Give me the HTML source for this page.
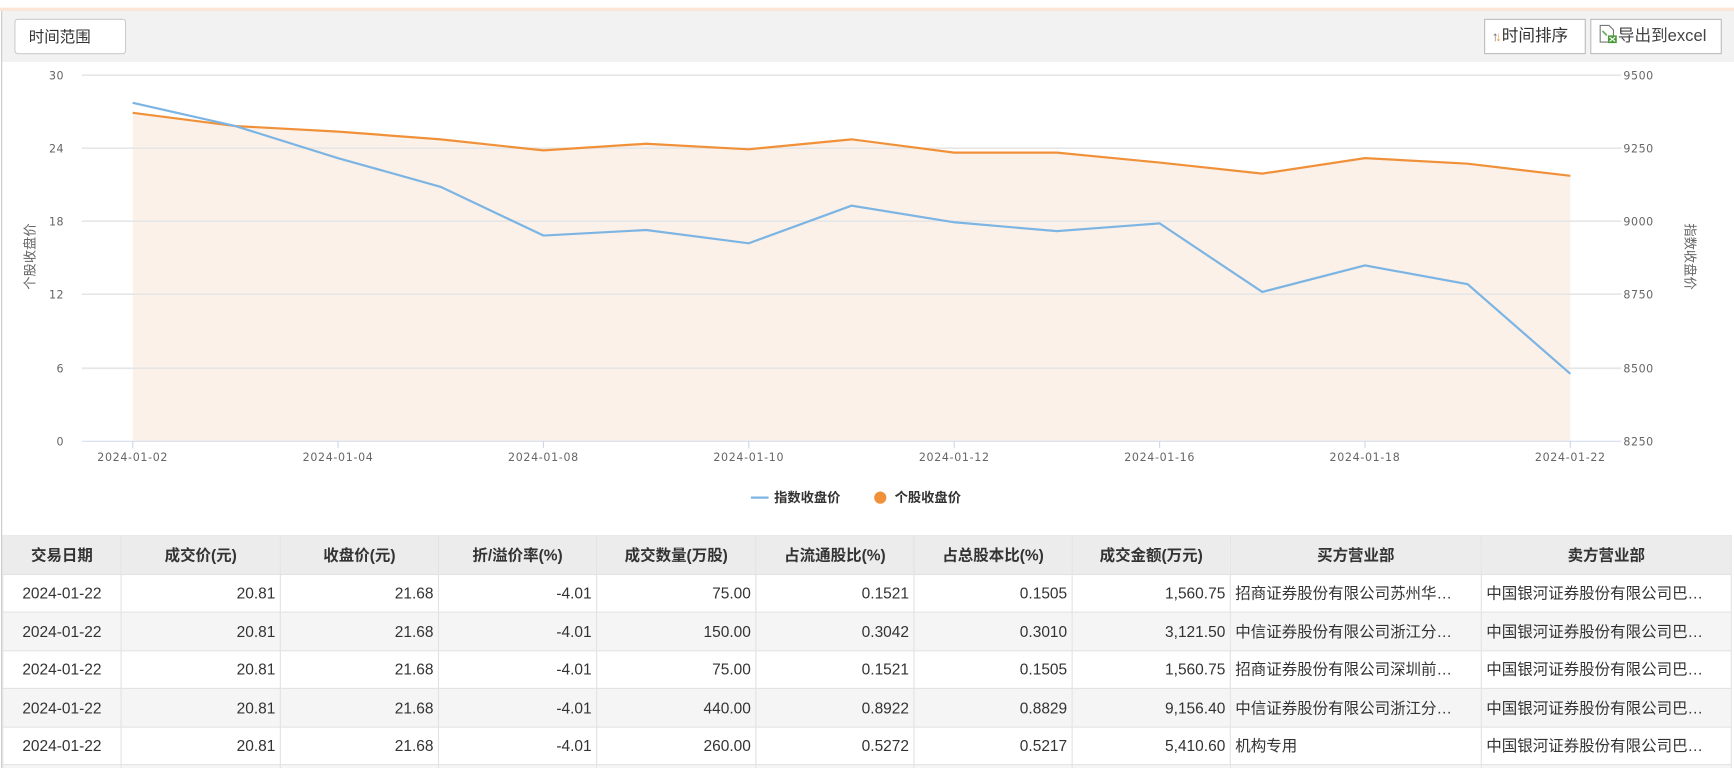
<!DOCTYPE html>
<html><head><meta charset="utf-8"><style>
html,body{margin:0;padding:0;background:#fff;overflow:hidden}
#w{width:1568px;height:695px;position:relative;transform:scale(1.10587);transform-origin:0 0;font-family:"Liberation Sans","Noto Sans CJK SC",sans-serif;color:#333}
.top{position:absolute;left:0;top:7px;width:1568px;height:3px;background:#fbe5d6}
.bar{position:absolute;left:1px;top:10px;width:1567px;height:46px;background:#f2f2f2}
.lb{position:absolute;left:1px;top:10px;width:1px;height:685px;background:#c8c8c8}
.btn{position:absolute;top:17px;height:32px;background:#fff;border:1px solid #bbb;box-sizing:border-box;font-size:14px;line-height:30px;color:#333}
table{position:absolute;left:2px;top:484px;border-collapse:collapse;font-size:14px;table-layout:fixed}
td,th{border:1px solid #e2e2e2;height:33.5px;padding:0 4px;white-space:nowrap;overflow:hidden}
th{background:#ececec;font-weight:bold;text-align:center}
td{text-align:right}
td.c{text-align:center}td.l{text-align:left}
tr.g td{background:#f5f5f5}
</style></head><body><div id="w">
<div class="top"></div><div class="bar"></div><div class="lb"></div>
<div class="btn" style="left:13px;width:101px;border-color:#ccc;border-radius:3px;padding-left:12px">时间范围</div>
<div class="btn" style="left:1342px;width:92px;padding-left:6px;font-size:15px"><span style="font-size:12px;color:#666;font-weight:bold">↑</span><span style="font-size:12px;color:#f39c3c;margin-left:-3px;font-weight:bold">↓</span>时间排序</div>
<div class="btn" style="left:1438px;width:119px;padding-left:6px;color:#444;font-size:15px"><svg width="18" height="18" viewBox="0 0 18 18" style="vertical-align:-3px"><path d="M2 1h8l4 4v11H2z" fill="#fff" stroke="#777"/><path d="M4 6l4 4" stroke="#6a6" stroke-width="1.5"/><rect x="9" y="10" width="8" height="7" fill="#4a9a3a"/><path d="M10.5 11.5l5 4M15.5 11.5l-5 4" stroke="#fff"/></svg>导出到excel</div>
<svg style="position:absolute;left:0;top:56px" width="1568" height="420" viewBox="0 56 1568 420" font-family="DejaVu Sans,Noto Sans CJK SC,sans-serif" font-size="10" fill="#666">
<polygon fill="#fcf1e8" points="120,102 212.9,114 305.7,119 398.6,126 491.4,136 584.3,130 677.1,135 770,126 862.9,138 955.7,138 1048.6,147 1141.4,157 1234.3,143 1327.1,148 1420,159 1420,399 120,399"/>
<g stroke="#e6e6e6" stroke-width="1.5"><line x1="74" y1="68" x2="1466" y2="68"/><line x1="74" y1="134" x2="1466" y2="134"/><line x1="74" y1="200" x2="1466" y2="200"/><line x1="74" y1="266" x2="1466" y2="266"/><line x1="74" y1="333" x2="1466" y2="333"/></g>
<line x1="74" y1="399" x2="1466" y2="399" stroke="#d0daeb"/>
<g stroke="#ccd6eb"><line x1="120" y1="399" x2="120" y2="405"/><line x1="305.7" y1="399" x2="305.7" y2="405"/><line x1="491.4" y1="399" x2="491.4" y2="405"/><line x1="677.1" y1="399" x2="677.1" y2="405"/><line x1="862.9" y1="399" x2="862.9" y2="405"/><line x1="1048.6" y1="399" x2="1048.6" y2="405"/><line x1="1234.3" y1="399" x2="1234.3" y2="405"/><line x1="1420" y1="399" x2="1420" y2="405"/></g>
<polyline fill="none" stroke="#f0913a" stroke-width="2" points="120,102 212.9,114 305.7,119 398.6,126 491.4,136 584.3,130 677.1,135 770,126 862.9,138 955.7,138 1048.6,147 1141.4,157 1234.3,143 1327.1,148 1420,159"/>
<polyline fill="none" stroke="#7cb5e4" stroke-width="2" points="120,93 212.9,114 305.7,143 398.6,169 491.4,213 584.3,208 677.1,220 770,186 862.9,201 955.7,209 1048.6,202 1141.4,264 1234.3,240 1327.1,257 1420,338"/>
<g text-anchor="end" letter-spacing="0.5"><text x="58" y="72">30</text><text x="58" y="138">24</text><text x="58" y="204">18</text><text x="58" y="270">12</text><text x="58" y="337">6</text><text x="58" y="403">0</text></g>
<g letter-spacing="0.5"><text x="1468" y="72">9500</text><text x="1468" y="138">9250</text><text x="1468" y="204">9000</text><text x="1468" y="270">8750</text><text x="1468" y="337">8500</text><text x="1468" y="403">8250</text></g>
<g text-anchor="middle" letter-spacing="0.6"><text x="120" y="417">2024-01-02</text><text x="305.7" y="417">2024-01-04</text><text x="491.4" y="417">2024-01-08</text><text x="677.1" y="417">2024-01-10</text><text x="862.9" y="417">2024-01-12</text><text x="1048.6" y="417">2024-01-16</text><text x="1234.3" y="417">2024-01-18</text><text x="1420" y="417">2024-01-22</text></g>
<text transform="translate(31,232) rotate(-90)" text-anchor="middle" font-size="12" font-family="Liberation Sans,Noto Sans CJK SC,sans-serif">个股收盘价</text>
<text transform="translate(1524,232) rotate(90)" text-anchor="middle" font-size="12" font-family="Liberation Sans,Noto Sans CJK SC,sans-serif">指数收盘价</text>
<line x1="679" y1="450" x2="695" y2="450" stroke="#7cb5e4" stroke-width="2"/>
<text x="700" y="454" font-size="12" font-weight="bold" fill="#333" font-family="Liberation Sans,Noto Sans CJK SC,sans-serif">指数收盘价</text>
<circle cx="796" cy="450" r="5.5" fill="#f0913a"/>
<text x="809" y="454" font-size="12" font-weight="bold" fill="#333" font-family="Liberation Sans,Noto Sans CJK SC,sans-serif">个股收盘价</text>
</svg>
<table>
<colgroup><col style="width:107px"><col style="width:144px"><col style="width:143px"><col style="width:143px"><col style="width:144px"><col style="width:143px"><col style="width:143px"><col style="width:143px"><col style="width:227px"><col style="width:226px"></colgroup>
<tr><th>交易日期</th><th>成交价(元)</th><th>收盘价(元)</th><th>折/溢价率(%)</th><th>成交数量(万股)</th><th>占流通股比(%)</th><th>占总股本比(%)</th><th>成交金额(万元)</th><th>买方营业部</th><th>卖方营业部</th></tr>
<tr><td class="c">2024-01-22</td><td>20.81</td><td>21.68</td><td>-4.01</td><td>75.00</td><td>0.1521</td><td>0.1505</td><td>1,560.75</td><td class="l">招商证券股份有限公司苏州华…</td><td class="l">中国银河证券股份有限公司巴…</td></tr>
<tr class="g"><td class="c">2024-01-22</td><td>20.81</td><td>21.68</td><td>-4.01</td><td>150.00</td><td>0.3042</td><td>0.3010</td><td>3,121.50</td><td class="l">中信证券股份有限公司浙江分…</td><td class="l">中国银河证券股份有限公司巴…</td></tr>
<tr><td class="c">2024-01-22</td><td>20.81</td><td>21.68</td><td>-4.01</td><td>75.00</td><td>0.1521</td><td>0.1505</td><td>1,560.75</td><td class="l">招商证券股份有限公司深圳前…</td><td class="l">中国银河证券股份有限公司巴…</td></tr>
<tr class="g"><td class="c">2024-01-22</td><td>20.81</td><td>21.68</td><td>-4.01</td><td>440.00</td><td>0.8922</td><td>0.8829</td><td>9,156.40</td><td class="l">中信证券股份有限公司浙江分…</td><td class="l">中国银河证券股份有限公司巴…</td></tr>
<tr><td class="c">2024-01-22</td><td>20.81</td><td>21.68</td><td>-4.01</td><td>260.00</td><td>0.5272</td><td>0.5217</td><td>5,410.60</td><td class="l">机构专用</td><td class="l">中国银河证券股份有限公司巴…</td></tr>
<tr class="g"><td class="c">2024-01-22</td><td>20.81</td><td>21.68</td><td>-4.01</td><td>100.00</td><td>0.2028</td><td>0.2007</td><td>2,081.00</td><td class="l">机构专用</td><td class="l">中国银河证券股份有限公司巴…</td></tr>
</table>
</div></body></html>
